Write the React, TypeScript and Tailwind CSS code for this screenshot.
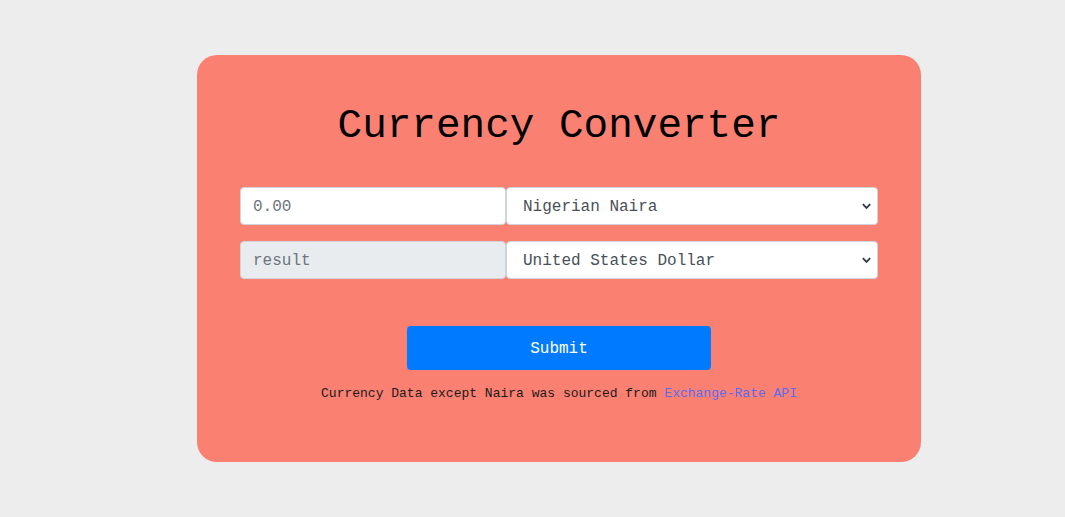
import React from "react";

const mono = { fontFamily: '"Liberation Mono", "DejaVu Sans Mono", monospace' };

function Chevron() {
    return (
        <svg
            className="pointer-events-none absolute right-[6px] top-1/2 -translate-y-1/2"
            width="11"
            height="11"
            viewBox="0 0 12 12"
        >
            <path d="M2 4 L6 8 L10 4" fill="none" stroke="#343a40" strokeWidth="2" />
        </svg>
    );
}

function CurrencySelect({ value }: { value: string }) {
    return (
        <div className="relative flex-1">
            <select
                defaultValue={value}
                className="h-[38px] w-full appearance-none rounded-[4px] border border-[#ced4da] bg-white pl-[16px] pr-[28px] pt-[2px] text-[16px] text-[#495057] outline-none"
                style={mono}
            >
                <option>Nigerian Naira</option>
                <option>United States Dollar</option>
                <option>Euro</option>
                <option>British Pound</option>
            </select>
            <Chevron />
        </div>
    );
}

export default function App() {
    return (
        <div className="min-h-[517px] w-full bg-[#ededed] pt-[55px] pb-[55px]" style={mono}>
            <div className="ml-[197px] w-[724px] rounded-[20px] bg-[#fa8072] px-[43px] pt-[47px] pb-[58px]">
                <h1 className="text-center text-[41px] leading-[48px] text-black">Currency Converter</h1>

                <div className="mt-[37px] flex flex-col gap-[16px]">
                    <div className="flex">
                        <input
                            type="text"
                            placeholder="0.00"
                            className="h-[38px] w-[266px] rounded-[4px] border border-[#ced4da] bg-white px-[12px] pt-[2px] text-[16px] text-[#495057] outline-none placeholder:text-[#6c757d]"
                            style={mono}
                        />
                        <CurrencySelect value="Nigerian Naira" />
                    </div>
                    <div className="flex">
                        <input
                            type="text"
                            placeholder="result"
                            disabled
                            className="h-[38px] w-[266px] rounded-[4px] border border-[#ced4da] bg-[#e9ecef] px-[12px] pt-[2px] text-[16px] text-[#495057] outline-none placeholder:text-[#6c757d]"
                            style={mono}
                        />
                        <CurrencySelect value="United States Dollar" />
                    </div>
                </div>

                <div className="mt-[47px] flex justify-center">
                    <button
                        type="button"
                        className="h-[44px] w-[304px] rounded-[4px] bg-[#007bff] pt-[2px] text-[16px] text-white"
                        style={mono}
                    >
                        Submit
                    </button>
                </div>

                <p className="mt-[14px] text-center text-[13px] leading-[20px] text-[#1a1a1a]">
                    Currency Data except Naira was sourced from{" "}
                    <a href="#" className="text-[#5a6cf0]">
                        Exchange-Rate API
                    </a>
                </p>
            </div>
        </div>
    );
}
